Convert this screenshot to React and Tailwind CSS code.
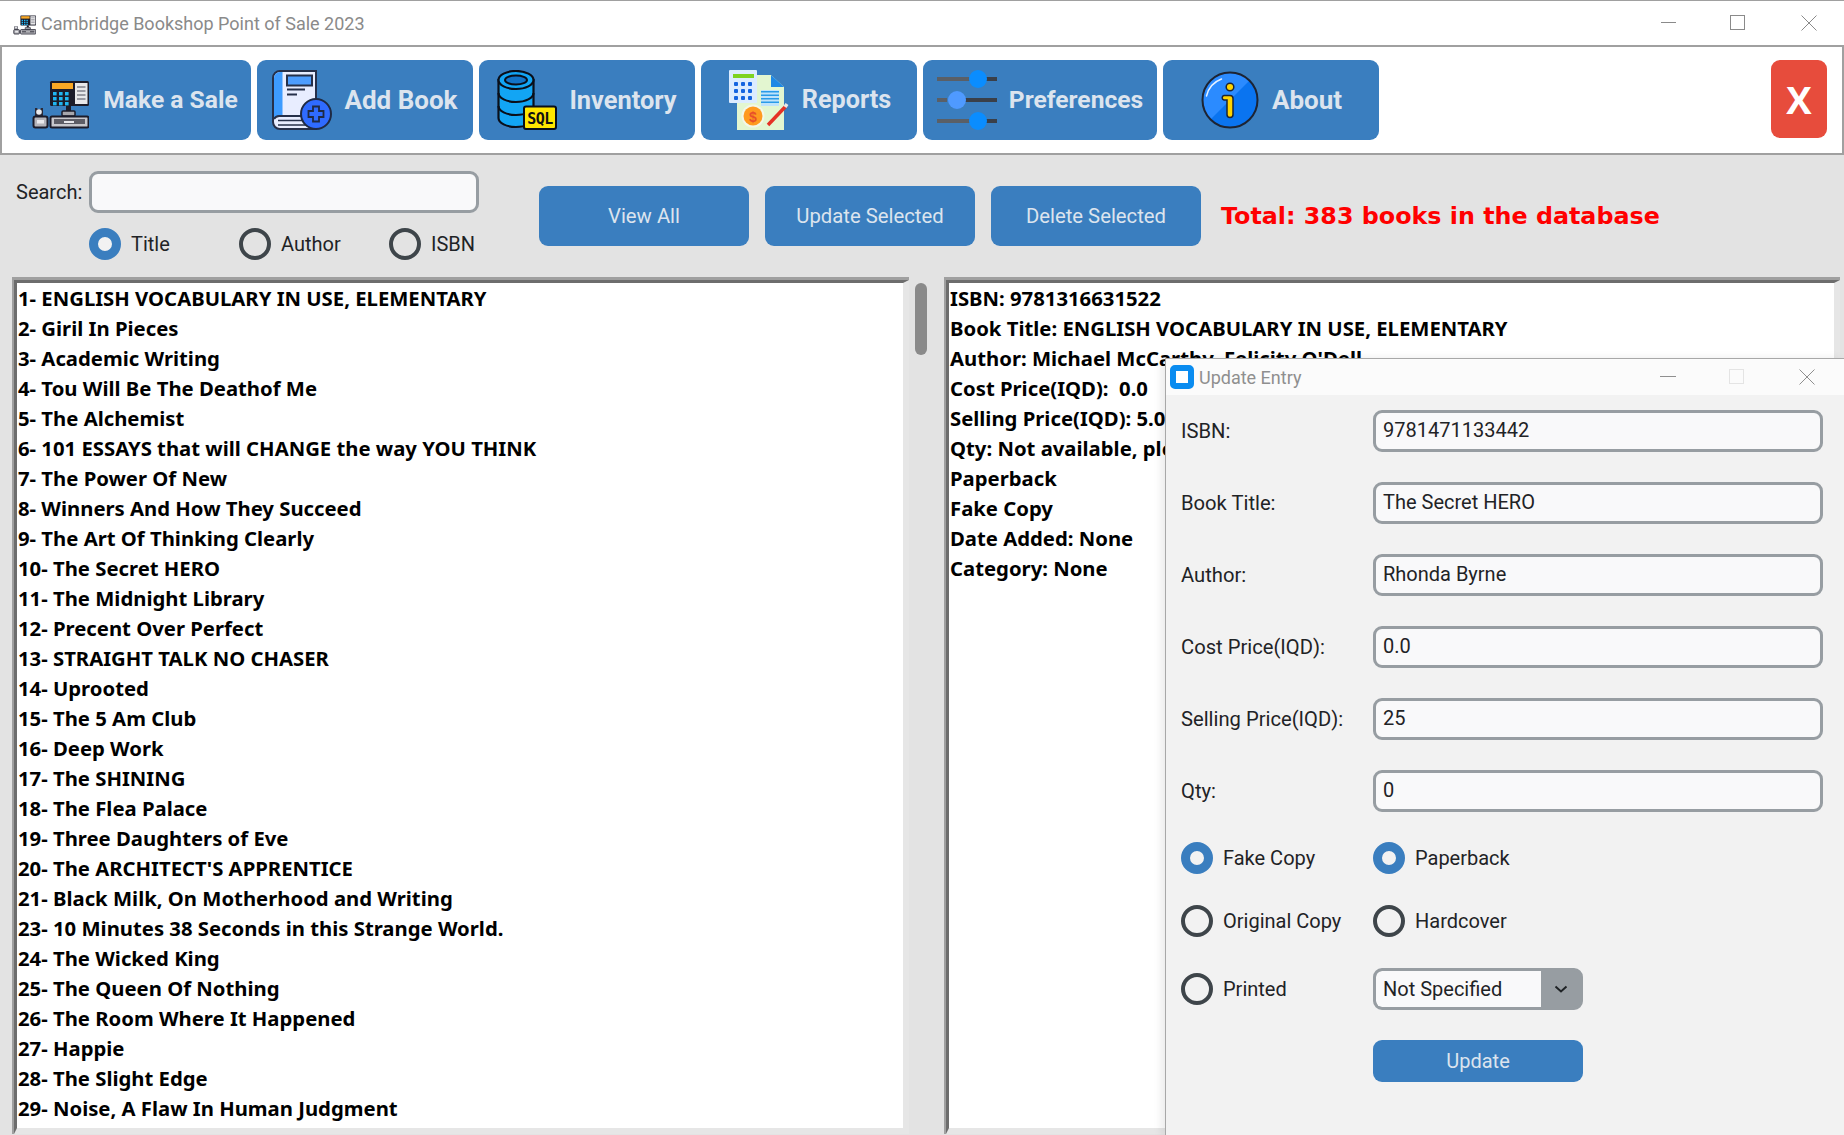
import React from "react";

const books = [
  "1- ENGLISH VOCABULARY IN USE, ELEMENTARY",
  "2- Giril In Pieces",
  "3- Academic Writing",
  "4- Tou Will Be The Deathof Me",
  "5- The Alchemist",
  "6- 101 ESSAYS that will CHANGE the way YOU THINK",
  "7- The Power Of New",
  "8- Winners And How They Succeed",
  "9- The Art Of Thinking Clearly",
  "10- The Secret HERO",
  "11- The Midnight Library",
  "12- Precent Over Perfect",
  "13- STRAIGHT TALK NO CHASER",
  "14- Uprooted",
  "15- The 5 Am Club",
  "16- Deep Work",
  "17- The SHINING",
  "18- The Flea Palace",
  "19- Three Daughters of Eve",
  "20- The ARCHITECT'S APPRENTICE",
  "21- Black Milk, On Motherhood and Writing",
  "23- 10 Minutes 38 Seconds in this Strange World.",
  "24- The Wicked King",
  "25- The Queen Of Nothing",
  "26- The Room Where It Happened",
  "27- Happie",
  "28- The Slight Edge",
  "29- Noise, A Flaw In Human Judgment",
];

const details = [
  "ISBN: 9781316631522",
  "Book Title: ENGLISH VOCABULARY IN USE, ELEMENTARY",
  "Author: Michael McCarthy, Felicity O'Dell",
  "Cost Price(IQD):  0.0",
  "Selling Price(IQD): 5.0",
  "Qty: Not available, please update",
  "Paperback",
  "Fake Copy",
  "Date Added: None",
  "Category: None",
];

const fields = [
  ["ISBN:", "9781471133442"],
  ["Book Title:", "The Secret HERO"],
  ["Author:", "Rhonda Byrne"],
  ["Cost Price(IQD):", "0.0"],
  ["Selling Price(IQD):", "25"],
  ["Qty:", "0"],
];

function PosIcon({ className }) {
  return (
    <svg viewBox="0 0 60 60" className={className}>
      <rect x="21" y="11" width="39" height="25" rx="1.5" fill="#1c1c2a" />
      <rect x="23" y="13" width="21" height="6" fill="#f9a825" />
      <rect x="46" y="13" width="12.5" height="21" fill="#e8e8ea" />
      {[16, 20, 24, 28].map((y) => (
        <rect key={y} x="48" y={y} width="8.5" height="2" fill="#9a9aa2" />
      ))}
      {[22, 27, 32].map((y) =>
        [24, 30, 36].map((x) => <rect key={x + "-" + y} x={x} y={y} width="3.6" height="3.4" fill="#1fb6f2" />)
      )}
      <rect x="37" y="36" width="5" height="5" fill="#1c1c2a" />
      <rect x="33" y="41" width="13" height="5" rx="1" fill="#a7a7ad" stroke="#1c1c2a" strokeWidth="1.5" />
      <rect x="21.5" y="46.5" width="38" height="11" rx="1.5" fill="#c7c7cc" stroke="#1c1c2a" strokeWidth="2" />
      <rect x="25" y="49" width="31" height="5" fill="#5d5d66" />
      <rect x="35" y="51" width="10" height="2" fill="#e6e6ea" />
      <path d="M6 38h2l1 1.500h2l1-1.500h2v8H6z" fill="#2a2a38" />
      <circle cx="10" cy="42" r="2.800" fill="#e9e9ec" />
      <rect x="4.500" y="46.500" width="14" height="11" rx="2" fill="#b4b4ba" stroke="#1c1c2a" strokeWidth="2" />
      <rect x="8" y="50" width="7" height="3.500" fill="#e9e9ec" />
    </svg>
  );
}

function BookIcon({ className }) {
  return (
    <svg viewBox="0 0 60 60" className={className}>
      <path d="M8 1h36v58H8a7 7 0 0 1-7-7V8a7 7 0 0 1 7-7z" fill="#e8edff" stroke="#26304a" strokeWidth="2" />
      <path d="M8 2h2.500v44H8a6 6 0 0 0-6 3V8a6 6 0 0 1 6-6z" fill="#3d9bff" />
      <path d="M2 49a6 6 0 0 1 6-3h36" fill="none" stroke="#26304a" strokeWidth="2" />
      <path d="M6 50.500h28M6 55h28" stroke="#26304a" strokeWidth="1.500" />
      <rect x="15" y="5.500" width="25" height="10" fill="#4d9dff" stroke="#26304a" strokeWidth="2" />
      <path d="M15 19.500h18M15 24.500h10" stroke="#26304a" strokeWidth="1.800" />
      <circle cx="44" cy="44" r="15" fill="#2f6bff" stroke="#1f2a44" strokeWidth="2" />
      <path d="M41 36.500h6v4.500h4.500v6H47v4.500h-6V47h-4.500v-6H41z" fill="none" stroke="#1f2a44" strokeWidth="1.800" />
    </svg>
  );
}

function DbIcon({ className }) {
  return (
    <svg viewBox="0 0 60 60" className={className}>
      <path d="M1.500 10v38c0 5 8 9 17.500 9s17.500-4 17.500-9V10z" fill="#12a5f4" stroke="#0a0f1a" strokeWidth="2.200" />
      <path d="M1.500 23c0 5 8 9 17.500 9s17.500-4 17.500-9M1.500 36c0 5 8 9 17.500 9s17.500-4 17.500-9" fill="none" stroke="#0a0f1a" strokeWidth="2.200" />
      <ellipse cx="19" cy="10" rx="17.500" ry="9" fill="#12a5f4" stroke="#0a0f1a" strokeWidth="2.200" />
      <ellipse cx="19" cy="10" rx="11" ry="4.500" fill="#1274c8" stroke="#0a0f1a" strokeWidth="2" />
      <rect x="27" y="36.500" width="32" height="22.500" rx="2" fill="#ffe600" stroke="#0a0f1a" strokeWidth="2" />
      <text x="43" y="54" textAnchor="middle" fontFamily="'DejaVu Sans Mono', monospace" fontWeight="700" fontSize="15" letterSpacing="-0.5" fill="#111">SQL</text>
    </svg>
  );
}

function ReportsIcon({ className }) {
  return (
    <svg viewBox="0 0 62 60" className={className}>
      <path d="M10 5h34l13 12v43H10z" fill="#e3f6d0" />
      <path d="M44 5l13 12H44z" fill="#1e88e5" />
      <rect x="2" y="0" width="28" height="33" rx="1" fill="#dcecff" />
      <rect x="6" y="4" width="21" height="4" fill="#7ed321" />
      {[12, 19, 26].map((y) =>
        [7, 14, 21].map((x) => <rect key={x + "-" + y} x={x} y={y} width="4" height="4" rx="1" fill="#1565e0" />)
      )}
      <rect x="34" y="20" width="18" height="16" fill="#bfe3fb" />
      {[21, 24.500, 28, 31.500].map((y) => (
        <rect key={y} x="34" y={y} width="18" height="1.500" fill="#2a9be8" />
      ))}
      <circle cx="26" cy="46" r="11.500" fill="#f3f7e8" />
      <circle cx="26" cy="46" r="9.500" fill="#ff9a1f" />
      <text x="26" y="51.500" textAnchor="middle" fontFamily="'Liberation Sans', sans-serif" fontWeight="700" fontSize="14" fill="#e8502a">$</text>
      <path d="M41 55l18-19" stroke="#e53225" strokeWidth="3.500" />
      <path d="M58 37l2-3" stroke="#e8e8e8" strokeWidth="3.500" />
    </svg>
  );
}

function SlidersIcon({ className }) {
  return (
    <svg viewBox="0 0 60 60" className={className}>
      <path d="M0 9h34M0 51h34M0 30h10" stroke="#5a5f66" strokeWidth="4" />
      <path d="M48 9h12M48 51h12M28 30h32" stroke="#3a3f48" strokeWidth="4" />
      <circle cx="41" cy="9" r="9" fill="#0a8dff" />
      <circle cx="20" cy="30" r="9" fill="#4f9aff" />
      <circle cx="41" cy="51" r="9" fill="#0a8dff" />
    </svg>
  );
}

function InfoIcon({ className }) {
  return (
    <svg viewBox="0 0 60 60" className={className}>
      <circle cx="30" cy="30" r="27.500" fill="#2b8bff" />
      <path d="M49.500 10.500A27.500 27.500 0 0 1 10.500 49.500z" fill="#0a74f0" />
      <circle cx="30" cy="30" r="27.500" fill="none" stroke="#1d2433" strokeWidth="2" />
      <path d="M6.500 26a24 24 0 0 1 15-17" fill="none" stroke="#e8f2ff" strokeWidth="1.500" strokeLinecap="round" />
      <circle cx="30" cy="17" r="3.800" fill="#ffd400" stroke="#1d2433" strokeWidth="1.500" />
      <path d="M24 25.500h6a3 3 0 0 1 3 3v16a3 3 0 0 1-6 0V30h-3a2.300 2.300 0 0 1 0-4.500z" fill="#ffd400" stroke="#1d2433" strokeWidth="1.500" />
    </svg>
  );
}

function NavButton({ icon: Icon, label, width, gap, size = "text-[24.6px]", iconClass = "w-[60px] h-[60px]" }) {
  return (
    <button className={`${width} ${gap} h-20 flex items-center justify-center rounded-[9px] bg-[#3a7ebf]`}>
      <Icon className={iconClass} />
      <span className={`${size} text-[#dce4ee] font-bold font-['Roboto',sans-serif]`}>{label}</span>
    </button>
  );
}

function Radio({ label, checked, className = "" }) {
  return (
    <div className={`flex items-center gap-[10px] ${className}`}>
      <span className={`w-8 h-8 rounded-full shrink-0 ${checked ? "border-[9px] border-[#3a7ebf] bg-[#f2f2f2]" : "border-[4px] border-[#3e454a]"}`} />
      <span className="text-[20px] text-[#1f2326] leading-none">{label}</span>
    </div>
  );
}

function ActionButton({ label }) {
  return (
    <button className="w-[210px] h-[60px] rounded-[9px] bg-[#3a7ebf] text-[#dce4ee] text-[20.3px]">{label}</button>
  );
}

function Panel({ lines, className }) {
  return (
    <div className={`${className} border-t-[3px] border-l-[2px] border-[#a0a0a0]`}>
      <div className="h-full border-t-[3px] border-l-[3px] border-[#6d6d6d] bg-white border-r-[6px] border-r-[#e6e6e6] border-b-[6px] border-b-[#e6e6e6] pl-[1px] overflow-hidden">
        {lines.map((line) => (
          <div key={line} className="h-[30px] leading-[30px] whitespace-pre text-[20.3px] font-bold text-black font-['Noto_Sans',sans-serif]">
            {line}
          </div>
        ))}
      </div>
    </div>
  );
}

function UpdateDialog() {
  return (
    <div className="absolute left-[1165px] top-[358px] w-[679px] h-[777px] border-l border-t border-[#a8a8a8] bg-[#f2f2f2] shadow-[-4px_0_8px_rgba(0,0,0,0.08)]">
      <div className="h-[36px] bg-[#fbfbfb] flex items-center relative">
        <span className="ml-[4px] w-[24px] h-[24px] rounded-[5px] border-[6px] border-[#0a8cf0] bg-white" />
        <span className="ml-[5px] text-[18px] text-[#8f8f8f]">Update Entry</span>
        <span className="absolute left-[494px] top-[17px] w-[16px] h-px bg-[#8f8f8f]" />
        <span className="absolute left-[563px] top-[10px] w-[15px] h-[15px] border border-[#e4e4e4]" />
        <svg viewBox="0 0 16 16" className="absolute left-[633px] top-[10px] w-[16px] h-[16px]">
          <path d="M0.500 0.500l15 15M15.500 0.500l-15 15" stroke="#8f8f8f" strokeWidth="1" />
        </svg>
      </div>
      <div className="pl-[15px] pr-[21px] pt-[15px] flex flex-col gap-[30px]">
        {fields.map(([label, value]) => (
          <div key={label} className="flex items-center h-[42px]">
            <span className="w-[192px] text-[20.2px] text-[#1f2326]">{label}</span>
            <div className="flex-1 h-[42px] rounded-[9px] border-[3px] border-[#979da2] bg-[#f9f9fa] px-[7px] text-[20px] leading-[34px] text-[#1f2326]">
              {value}
            </div>
          </div>
        ))}
      </div>
      <div className="pl-[15px] mt-[30px] grid grid-cols-[192px_210px] items-center">
        <Radio label="Fake Copy" checked className="h-8" />
        <Radio label="Paperback" checked className="h-8" />
        <Radio label="Original Copy" className="h-8 mt-[31px]" />
        <Radio label="Hardcover" className="h-8 mt-[31px]" />
        <Radio label="Printed" className="h-8 mt-[31px]" />
        <div className="mt-[31px] h-[42px] rounded-[9px] border-[3px] border-[#979da2] bg-[#979da2] flex overflow-hidden">
          <div className="w-[165px] bg-[#f9f9fa] rounded-l-[6px] px-[7px] text-[20px] leading-[36px] text-[#1f2326]">Not Specified</div>
          <div className="flex-1 flex items-center justify-center">
            <svg viewBox="0 0 14 8" className="w-[14px] h-[8px]">
              <path d="M1.500 1.500L7 6.500l5.500-5" fill="none" stroke="#1f2326" strokeWidth="2" />
            </svg>
          </div>
        </div>
        <button className="col-start-2 mt-[30px] h-[42px] rounded-[9px] bg-[#3a7ebf] text-[#dce4ee] text-[20px]">Update</button>
      </div>
    </div>
  );
}

export default function App() {
  return (
    <div className="relative w-[1844px] h-[1135px] overflow-hidden bg-[#e3e3e3] font-['Roboto',sans-serif]">
      {/* title bar */}
      <div className="h-[47px] bg-white border-t-[1px] border-b-[2px] border-[#a0a0a0] flex items-center relative">
        <PosIcon className="ml-[12px] w-[24px] h-[24px]" />
        <span className="ml-[5px] text-[18px] text-[#8a8a8a]">Cambridge Bookshop Point of Sale 2023</span>
        <span className="absolute left-[1661px] top-[21px] w-[15px] h-px bg-[#8a8a8a]" />
        <span className="absolute left-[1730px] top-[14px] w-[15px] h-[15px] border border-[#8a8a8a]" />
        <svg viewBox="0 0 16 16" className="absolute left-[1801px] top-[14px] w-[16px] h-[16px]">
          <path d="M0.500 0.500l15 15M15.500 0.500l-15 15" stroke="#8a8a8a" strokeWidth="1" />
        </svg>
      </div>

      {/* toolbar */}
      <div className="h-[108px] bg-white border-l-[2px] border-r-[2px] border-b-[2px] border-[#a0a0a0] pl-[14px] pr-[15px] pt-[13px] flex">
        <div className="flex gap-[6px]">
          <NavButton icon={PosIcon} label="Make a Sale" width="w-[235px]" gap="gap-[14px]" />
          <NavButton icon={BookIcon} label="Add Book" size="text-[26px]" width="w-[216px]" gap="gap-[12px]" />
          <NavButton icon={DbIcon} label="Inventory" size="text-[25.4px]" width="w-[216px]" gap="gap-[12px]" />
          <NavButton icon={ReportsIcon} label="Reports" size="text-[25.2px]" width="w-[216px]" gap="gap-[13px]" iconClass="w-[62px] h-[60px]" />
          <NavButton icon={SlidersIcon} label="Preferences" width="w-[234px]" gap="gap-[12px]" />
          <NavButton icon={InfoIcon} label="About" size="text-[26px]" width="w-[216px]" gap="gap-[12px]" />
        </div>
        <button className="ml-auto w-[56px] h-[78px] rounded-[9px] bg-[#e74c3c] text-white text-[38px] font-bold font-['Open_Sans',sans-serif] leading-none">X</button>
      </div>

      {/* search and actions */}
      <div className="h-[122px] flex">
        <div className="w-[539px] pl-4 pt-4 shrink-0">
          <div className="flex items-center">
            <span className="w-[73px] text-[20px] text-[#1f2326]">Search:</span>
            <div className="w-[390px] h-[42px] rounded-[9px] border-[3px] border-[#979da2] bg-[#f9f9fa]" />
          </div>
          <div className="flex mt-[15px] ml-[73px]">
            <Radio label="Title" checked className="w-[150px]" />
            <Radio label="Author" className="w-[150px]" />
            <Radio label="ISBN" />
          </div>
        </div>
        <div className="pt-[31px] flex items-start gap-4">
          <ActionButton label="View All" />
          <ActionButton label="Update Selected" />
          <ActionButton label="Delete Selected" />
          <span className="ml-[4px] mt-[13px] text-[23.8px] font-bold text-[#ff0000] font-['DejaVu_Sans',sans-serif]">Total: 383 books in the database</span>
        </div>
      </div>

      {/* lists */}
      <div className="h-[858px] flex pl-[12px]">
        <Panel lines={books} className="w-[897px] h-[857px]" />
        <div className="w-[35px] pl-[6px] pt-[6px]">
          <div className="w-[12px] h-[72px] rounded-full bg-[#8a8a8a]" />
        </div>
        <Panel lines={details} className="w-[896px] h-[857px]" />
      </div>

      <UpdateDialog />
    </div>
  );
}
